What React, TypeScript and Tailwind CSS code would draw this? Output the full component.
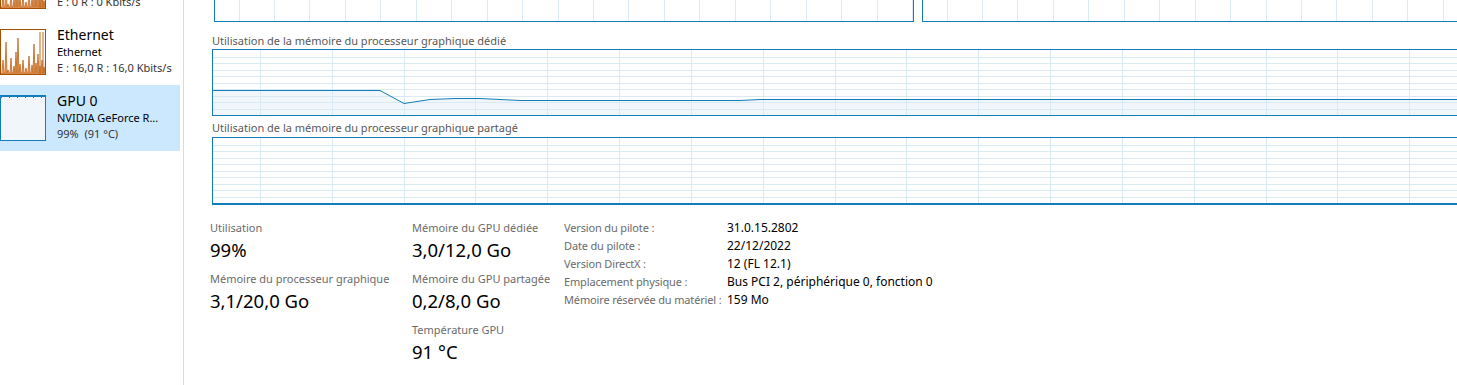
import React from 'react';

const BLUE = '#117dbb';
const GRID = '#d9eaf5';

// vertical grid positions for a chart, given offset and spacing
function vlines(offset: number, step: number, width: number) {
  const out: number[] = [];
  for (let x = offset; x < width; x += step) out.push(Math.round(x) + 0.5);
  return out;
}

function GridSvg({ width, height, rows, vOffset, vStep }: { width: number; height: number; rows: number; vOffset: number; vStep: number }) {
  const hs: number[] = [];
  if (rows > 0) for (let i = 1; i < rows; i++) hs.push(Math.round((height * i) / rows) + 0.5);
  return (
    <>
      {hs.map((y) => (
        <line key={'h' + y} x1={0} x2={width} y1={y} y2={y} stroke={GRID} strokeWidth={1} />
      ))}
      {vlines(vOffset, vStep, width).map((x) => (
        <line key={'v' + x} x1={x} x2={x} y1={0} y2={height} stroke={GRID} strokeWidth={1} />
      ))}
    </>
  );
}

function TopChart({ width, vOffset }: { width: number; vOffset: number }) {
  return (
    <div className="h-[22px] border-x border-b border-[#117dbb] overflow-hidden shrink-0" style={{ width }}>
      <svg width={width} height={21} className="block">
        <GridSvg width={width} height={21} rows={0} vOffset={vOffset} vStep={35.45} />
      </svg>
    </div>
  );
}

const dedicatedPts: [number, number][] = [
  [0, 40], [167, 40], [191, 53], [217, 49], [242, 48], [267, 48], [307, 50], [527, 50], [547, 49], [1300, 49],
];

function DedicatedChart() {
  const w = 1300;
  const h = 65;
  const line = dedicatedPts.map(([x, y]) => `${x},${y + 0.5}`).join(' ');
  const fill = `0,${h} ${line} ${w},${h}`;
  return (
    <div className="h-[67px] w-[1300px] border border-r-0 border-[#117dbb] overflow-hidden">
      <svg width={w} height={h} className="block">
        <polygon points={fill} fill="#f1f6fa" />
        <GridSvg width={w} height={h} rows={10} vOffset={47} vStep={71.83} />
        <polyline points={line} fill="none" stroke={BLUE} strokeWidth={1} />
      </svg>
    </div>
  );
}

function SharedChart() {
  const w = 1300;
  const h = 65;
  return (
    <div className="h-[68px] w-[1300px] border border-r-0 border-b-2 border-[#117dbb] overflow-hidden">
      <svg width={w} height={h} className="block">
        <GridSvg width={w} height={h} rows={10} vOffset={47} vStep={71.83} />
      </svg>
    </div>
  );
}

function EthernetThumb() {
  // spiky network graph
  const spikes = [
    [2, 30], [5, 12], [7, 40], [10, 28], [13, 36], [15, 22], [17, 8], [19, 34], [22, 30], [25, 38], [28, 26], [31, 35],
    [33, 14], [35, 33], [37, 24], [39, 36], [41, 30], [43, 37], [45, 12],
  ];
  let d = 'M0,44';
  spikes.forEach(([x, y]) => {
    d += ` L${x - 1},43 L${x},${y} L${x + 1},43`;
  });
  d += ' L44,44 Z';
  return (
    <div className="w-[46px] h-[46px] border border-[#a74f01] bg-white overflow-hidden shrink-0">
      <svg width={44} height={44} className="block">
        <path d={d} fill="#e8a56b" stroke="#c0661a" strokeWidth={0.8} />
        <line x1={39} x2={39} y1={2} y2={44} stroke="#c0661a" strokeWidth={1} />
        <line x1={42} x2={42} y1={2} y2={44} stroke="#c0661a" strokeWidth={1} />
      </svg>
    </div>
  );
}

function GpuThumb() {
  return (
    <div className="w-[46px] h-[46px] border border-[#117dbb] bg-[#f1f6fa] overflow-hidden shrink-0">
      <svg width={44} height={44} className="block">
        <line x1={0} x2={44} y1={1.5} y2={1.5} stroke={BLUE} strokeWidth={1} strokeDasharray="1 7" />
        <line x1={0} x2={44} y1={0.5} y2={0.5} stroke={BLUE} strokeWidth={1} />
      </svg>
    </div>
  );
}

function SideItem({ thumb, title, sub, info, selected }: { thumb: React.ReactNode; title: string; sub: string; info: string; selected?: boolean }) {
  return (
    <div className={`h-[66px] flex gap-[11px] pt-[10px] whitespace-pre ${selected ? 'bg-[#cce8ff]' : ''}`}>
      {thumb}
      <div className="flex flex-col -mt-[3px]">
        <span className="text-[14px] leading-[18px] text-black">{title}</span>
        <span className="text-[11px] leading-[16px] text-black">{sub}</span>
        <span className="text-[11px] leading-[16px] text-[#333]">{info}</span>
      </div>
    </div>
  );
}

function Stat({ label, value }: { label: string; value: string }) {
  return (
    <div className="flex flex-col whitespace-nowrap">
      <span className="text-[11px] leading-[16px] text-[#6b6b6b]">{label}</span>
      <span className="text-[18.5px] leading-[24px] text-black mt-[2px]">{value}</span>
    </div>
  );
}

const props = [
  ['Version du pilote :', '31.0.15.2802'],
  ['Date du pilote :', '22/12/2022'],
  ['Version DirectX :', '12 (FL 12.1)'],
  ['Emplacement physique :', 'Bus PCI 2, périphérique 0, fonction 0'],
  ['Mémoire réservée du matériel :', '159 Mo'],
];

export default function App() {
  return (
    <div
      className="w-[1457px] h-[385px] bg-white overflow-hidden flex"
      style={{ fontFamily: '"Segoe UI", "Noto Sans", sans-serif' }}
    >
      <aside className="w-[180px] shrink-0 -mt-[47px]">
        <SideItem thumb={<EthernetThumb />} title="Ethernet" sub="Ethernet" info="E : 0 R : 0 Kbits/s" />
        <SideItem thumb={<EthernetThumb />} title="Ethernet" sub="Ethernet" info="E : 16,0 R : 16,0 Kbits/s" />
        <SideItem thumb={<GpuThumb />} title="GPU 0" sub="NVIDIA GeForce R..." info="99%  (91 °C)" selected />
      </aside>
      <div className="w-[3px] shrink-0" />
      <div className="w-px shrink-0 bg-[#d9d9d9]" />
      <main className="flex-1 min-w-0 overflow-hidden">
        <div className="flex gap-[8px] pl-[30px]">
          <TopChart width={700} vOffset={23.5} />
          <TopChart width={600} vOffset={23.5} />
        </div>
        <div className="pl-[28px]">
          <div className="mt-[11px] text-[11px] leading-[15px] text-[#595959] whitespace-nowrap">
            Utilisation de la mémoire du processeur graphique dédié
          </div>
          <div className="mt-[1px]">
            <DedicatedChart />
          </div>
          <div className="mt-[4px] text-[11px] leading-[15px] text-[#595959] whitespace-nowrap">
            Utilisation de la mémoire du processeur graphique partagé
          </div>
          <div className="mt-[2px]">
            <SharedChart />
          </div>
        </div>
        <div className="flex items-start pl-[26px] mt-[15px]">
          <div className="w-[202px] flex flex-col gap-[9px]">
            <Stat label="Utilisation" value="99%" />
            <Stat label="Mémoire du processeur graphique" value="3,1/20,0 Go" />
          </div>
          <div className="w-[152px] flex flex-col gap-[9px]">
            <Stat label="Mémoire du GPU dédiée" value="3,0/12,0 Go" />
            <Stat label="Mémoire du GPU partagée" value="0,2/8,0 Go" />
            <Stat label="Température GPU" value="91 °C" />
          </div>
          <div className="grid grid-cols-[163px_auto] auto-rows-[18px] leading-[18px] -mt-[1px] whitespace-nowrap">
            {props.map(([k, v]) => (
              <React.Fragment key={k}>
                <span className="text-[11px] tracking-[-0.15px] text-[#6b6b6b]">{k}</span>
                <span className="text-[12px] text-black">{v}</span>
              </React.Fragment>
            ))}
          </div>
        </div>
      </main>
    </div>
  );
}
